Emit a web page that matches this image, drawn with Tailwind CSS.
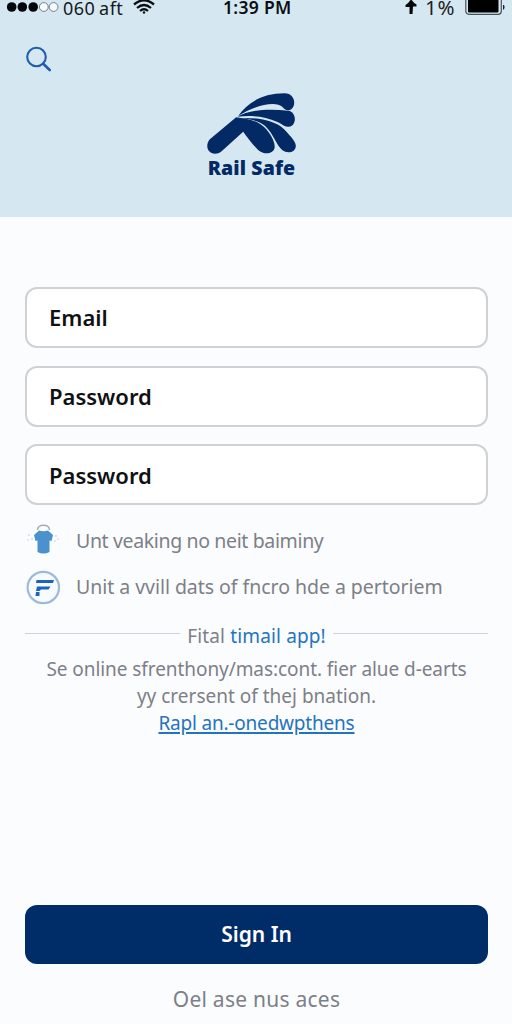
<!DOCTYPE html>
<html lang="en">
<head>
<meta charset="utf-8">
<title>Rail Safe</title>
<script src="https://cdn.jsdelivr.net/npm/@tailwindcss/browser@4"></script>
</head>
<body class="bg-[#fbfcfe]">
<div class="flex h-[1024px] w-[512px] flex-col overflow-hidden bg-[#fbfcfe] font-['Noto_Sans',sans-serif] text-[#7d8087]">
  <header class="h-[217px] shrink-0 bg-[#d5e8f1]">
    <div class="relative flex h-4 items-center justify-between text-black">
      <div class="flex items-center pl-[7px]">
        <svg class="h-4 w-[52px]" viewBox="0 0 52 16"><g fill="#05080b"><circle cx="4.700" cy="7" r="4.800"/><circle cx="15.300" cy="7" r="4.800"/><circle cx="26.200" cy="7" r="4.800"/></g><g fill="#f5fafc" stroke="#59656b" stroke-width=".8"><circle cx="36.800" cy="7" r="4.400"/><circle cx="46.600" cy="7" r="4.400"/></g></svg>
        <span class="ml-1 w-[70px] text-[18px] leading-4 tracking-[.5px] [word-spacing:-1.500px] whitespace-nowrap text-[#15191c]">060 aft</span>
        <svg class="h-4 w-[22px]" viewBox="0 0 22 16" fill="none" stroke="#0b0f12" stroke-width="2.300"><path d="M1 4.500Q11-4 21 4.500M4 8Q11 2 18 8M7 11Q11 7.500 15 11"/><circle cx="11" cy="12.500" r="1.200" fill="#0b0f12" stroke="none"/></svg>
      </div>
      <span class="absolute left-[223px] -top-px text-[17.500px] leading-4 font-semibold tracking-[.3px] whitespace-nowrap text-[#0b0f12]">1:39 PM</span>
      <div class="flex items-center pr-[6px]">
        <svg class="h-4 w-3" viewBox="0 0 12 16"><path d="M6-1Q8.500 3 11.500 4.500V6.500H8L7.500 14H4.500V7H.5V5Q4 3 6-1Z" fill="#05080b"/></svg>
        <span class="ml-[8px] w-[40px] text-[20.500px] leading-4 tracking-[.8px] whitespace-nowrap text-[#1d2327] -mt-[2px]">1%</span>
        <svg class="h-4 w-[41px]" viewBox="0 0 41 16"><rect x=".8" y="-4" width="35.500" height="18.300" rx="3" fill="#d5e8f1" stroke="#45525a" stroke-width="1.200"/><rect x="3" y="-1" width="30.500" height="13.500" rx="1" fill="#000"/><path d="M38 5h1q1.300 2 0 4.500h-1z" fill="#17212a"/></svg>
      </div>
    </div>
    <svg class="mt-[30px] ml-[25px] h-7 w-7" viewBox="0 0 28 28" fill="none" stroke="#1e5cb0" stroke-linecap="round"><circle cx="11.500" cy="11" r="9.300" stroke-width="2.100"/><path d="M18.200 17.700L24.700 24" stroke-width="2.600"/></svg>
    <div class="mt-[11px] flex flex-col items-center">
      <svg class="h-[72px] w-[115px] -translate-x-[3.500px]" viewBox="0 0 345 216" fill="#042a66">
        <path d="M122 97L43 163C28 181 36 206 58 206C68 206 74 202 80 197L143 140C155 155 170 178 188 195C205 210 232 208 237 190C242 170 215 125 185 112C165 103 140 100 122 97Z"/>
        <path d="M137 99C185 97 240 107 265 132C280 148 300 168 301 182C301 203 275 207 261 196C242 180 235 148 209 123C192 108 164 103 137 99Z"/>
        <path d="M126 95C157 74 220 71 278 77C305 80 304 124 280 125C267 127 260 117 246 111C205 93 166 91 126 95Z"/>
        <path d="M128 93C157 53 200 25 267 25C297 25 303 58 289 71C279 79 268 76 261 66C241 46 177 61 128 93Z"/>
      </svg>
      <span class="-mt-[2px] -translate-x-[4.500px] text-[19.500px] leading-[26px] font-black tracking-[.1px] whitespace-nowrap text-[#042a66]">Rail Safe</span>
    </div>
  </header>
  <main class="flex flex-1 flex-col pr-6 pl-[25px]">
    <div class="mt-[70px] flex flex-col gap-[17.500px] text-[22px] font-semibold text-[#101113]">
      <div class="flex h-[61px] items-center rounded-[12px] border-2 border-[#cfd1d4] bg-white pl-[22px]"><span>Email</span></div>
      <div class="flex h-[61px] items-center rounded-[12px] border-2 border-[#cfd1d4] bg-white pt-px pl-[22px]"><span>Password</span></div>
      <div class="flex h-[61px] items-center rounded-[12px] border-2 border-[#cfd1d4] bg-white pt-[2px] pl-[22px]"><span>Password</span></div>
    </div>
    <div class="mt-[13px] flex h-[46px] items-center text-[20px]">
      <svg class="mr-[16px] -ml-px h-9 w-9 shrink-0" viewBox="0 0 36 36"><path d="M13.500 7C13.500 .5 25.500 .5 25.500 7" fill="none" stroke="#a5aab0" stroke-width="1.500"/><path d="M15 7.500Q19 9 24 7.500L29 12L27.500 18L25.500 17.500V29Q19.500 32 13.500 29V17.500L11.500 18L10 12Z" fill="#4b91cd"/><g fill="#a9cbe3"><circle cx="5" cy="12" r=".8"/><circle cx="8" cy="16" r=".8"/><circle cx="4" cy="17" r=".7"/><circle cx="32" cy="13" r=".8"/><circle cx="34" cy="16" r=".7"/><circle cx="31" cy="18" r=".7"/></g></svg>
      <span class="text-[19.500px] tracking-[-.36px] whitespace-nowrap">Unt veaking no neit baiminy</span>
    </div>
    <div class="flex h-[46px] items-center text-[20px]">
      <svg class="mr-[16px] -ml-px h-9 w-9 shrink-0" viewBox="0 0 36 36"><circle cx="19.300" cy="18.500" r="15.700" fill="#f8fbfe" stroke="#9dbbd9" stroke-width="2.200"/><path d="M12.500 11H30L29 14H12Z M13 17.500H26.500L24.500 20.500H17L15.500 22H12Z M12 23H15.500V27H11.500Z" fill="#1c64ba"/></svg>
      <span class="text-[19.500px] tracking-[-.04px] whitespace-nowrap">Unit a vvill dats of fncro hde a pertoriem</span>
    </div>
    <div class="mt-[13px] flex h-[26px] items-center text-[19px] tracking-[.15px]">
      <i class="mb-[5px] h-px flex-1 bg-[#cfd3d7]"></i>
      <span class="mx-[7px] whitespace-nowrap">Fital <span class="text-[#2474bd]">timail app!</span></span>
      <i class="mb-[5px] h-px flex-1 bg-[#cfd3d7]"></i>
    </div>
    <div class="mt-[7px] flex flex-col items-center text-[19px] leading-[27px] whitespace-nowrap">
      <span class="tracking-[-.07px]">Se online sfrenthony/mas:cont. fier alue d-earts</span>
      <span>yy crersent of thej bnation.</span>
      <a class="tracking-[-.2px] text-[#2474bd] underline decoration-[1.500px] underline-offset-[2px]">Rapl an.-onedwpthens</a>
    </div>
    <div class="mt-auto flex h-[59px] items-center justify-center rounded-[12px] bg-[#002d67] text-[21px] font-semibold text-white"><span>Sign In</span></div>
    <div class="flex h-[60px] items-center justify-center pt-[11px] text-[21px] tracking-[.25px]"><span>Oel ase nus aces</span></div>
  </main>
</div>
</body>
</html>
